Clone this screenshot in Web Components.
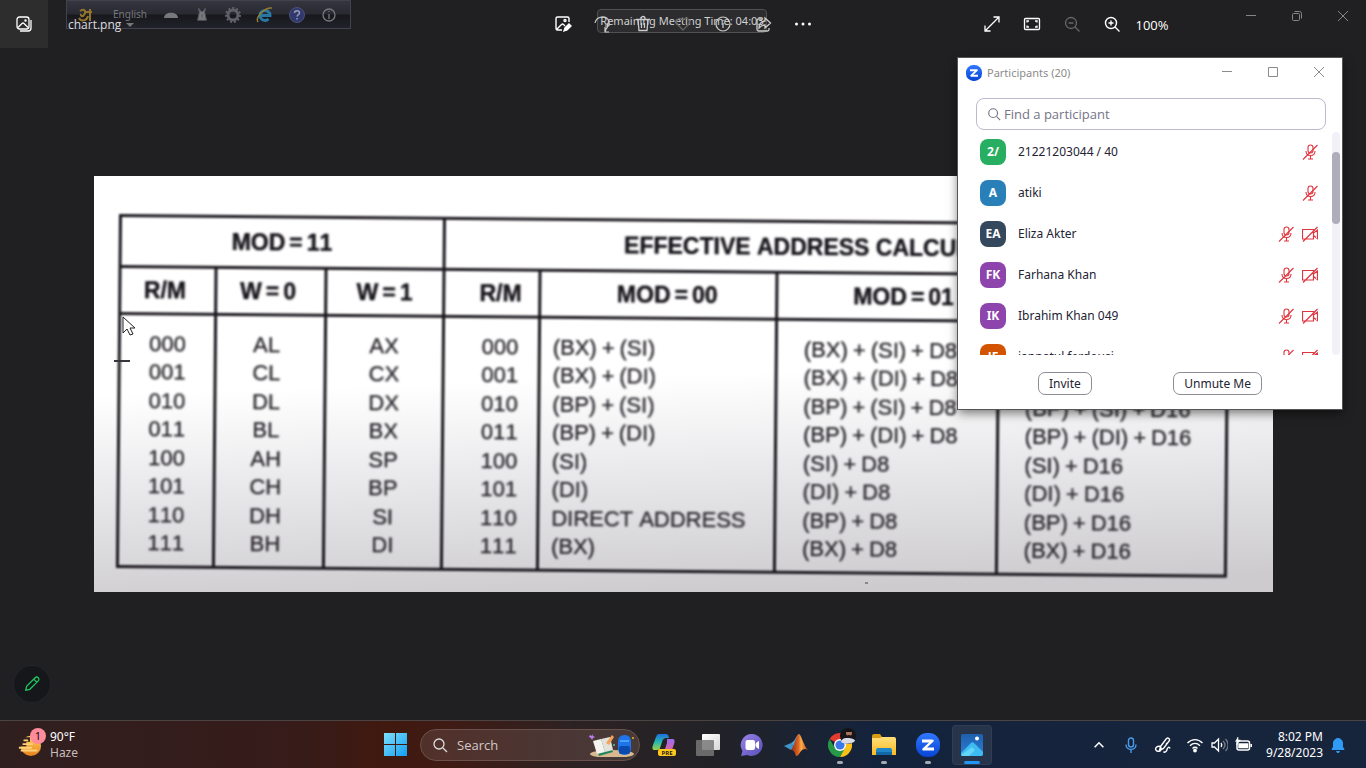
<!DOCTYPE html>
<html lang="en">
<head>
<meta charset="utf-8">
<title>chart.png</title>
<style>
  html, body { height: 100%; }
  body { margin: 0; background: #202022; color: #fff; font: 12px/16px "Noto Sans", "Open Sans", sans-serif; overflow: hidden; }
</style>
</head>
<body>
<photo-desktop></photo-desktop>
<script>
const define = (name, html, setup) => {
  const template = document.createElement('template');
  template.innerHTML = html;
  customElements.define(name, class extends HTMLElement {
    connectedCallback() {
      if (this.shadowRoot) return;
      this.attachShadow({ mode: 'open' }).append(template.content.cloneNode(true));
      if (setup) setup(this, this.shadowRoot);
    }
  });
};

/* name: [size, body, stroke width] */
const icons = {
  gallery: [18, '<rect x="2" y="2" width="12" height="12" rx="2.5"/><path d="M16 5v8a3 3 0 0 1-3 3H5M3 12.500l4-4a1.500 1.500 0 0 1 2 0l4 4"/><circle cx="10.500" cy="5.500" r=".6"/>', 1.3],
  edit: [18, '<path d="M8 15H3.500A1.500 1.500 0 0 1 2 13.500v-10A1.500 1.500 0 0 1 3.500 2h10A1.500 1.500 0 0 1 15 3.500V7M3 14l4.500-4.500a1.500 1.500 0 0 1 2 0L11 11"/><circle cx="11" cy="5.500" r="1"/><path d="M10 16l1-3 4-4 2 2-4 4z" fill="currentColor"/>', 1.4],
  rotate: [18, '<path d="M1 8a7.500 7.500 0 0 1 14-2v5M15 11l-4 0M13 8a5 5 0 0 1-1 6l-1 3M11 12v5h4"/>', 1.2],
  trash: [18, '<path d="M2 4.500h14M7 4.500V3.500a2 2 0 0 1 4 0v1M4 5l1 10.500h8L14 5M7.500 8v5M10.500 8v5"/>', 1.3],
  heart: [18, '<path d="M9 15L3 9a3.500 3.500 0 0 1 6-4 3.500 3.500 0 0 1 6 4z"/>', 1.2],
  info: [18, '<circle cx="9" cy="9" r="7"/><path d="M9 8v5M9 5v1"/>', 1.2],
  share: [18, '<path d="M8 4H4.500A1.500 1.500 0 0 0 3 5.500v9A1.500 1.500 0 0 0 4.500 16h9a1.500 1.500 0 0 0 1.500-1.500V13M11 3l5.500 5L11 13v-3c-3 0-4 .5-6 3 0-4 2-6.500 6-7z"/>', 1.3],
  more: [18, '<g fill="currentColor" stroke="none"><circle cx="2.500" cy="9" r="1.500"/><circle cx="9" cy="9" r="1.500"/><circle cx="15.500" cy="9" r="1.500"/></g>'],
  expand: [18, '<path d="M10.500 2H16v5.500M16 2L2 16M2 10.500V16h5.500"/>', 1.3],
  fit: [18, '<rect x="1.500" y="3.500" width="15" height="11" rx="1"/><path d="M4 7.500V6h2M12 6h2v1.500M14 10.500V12h-2M6 12H4v-1.500"/>', 1.3],
  zoomout: [18, '<circle cx="8" cy="8" r="5.500"/><path d="M12 12l4.500 4.500M5.500 8h5"/>', 1.3],
  zoomin: [18, '<circle cx="8" cy="8" r="5.500"/><path d="M12 12l4.500 4.500M5.500 8h5M8 5.500v5"/>', 1.4],
  min: [12, '<path d="M1 5.500h10"/>', 1],
  max: [12, '<path d="M1.500 1.500h9v9h-9z"/>', 1],
  restore: [12, '<rect x="1.500" y="3.500" width="7" height="7" rx="1"/><path d="M3.500 1.500h5a2 2 0 0 1 2 2v5"/>', 1],
  close: [12, '<path d="M1 1l10 10M11 1L1 11"/>', 1],
  search: [16, '<circle cx="7" cy="7" r="5"/><path d="M11 11l4 4"/>', 1.3],
  pen: [18, '<path d="M2 16l1-4.500 9.500-9.500a2.200 2.200 0 0 1 3.500 3.500L6.500 15zM11 3.500L14.500 7M2 16l4.500-1"/>', 1.5],
  micoff: [16, '<rect x="6" y="1" width="5" height="8" rx="2.500"/><path d="M4 7c0 6 9 6 9 0M8.500 11.500V15M6 15h5M1 15.500L15.500 1"/>', 1.1],
  camoff: [16, '<path d="M11.500 3.500H.5v9.500h11zM11.500 7l4-3v8.500l-4-3M1 15.500L15.500 1"/>', 1.2],
  chevron: [16, '<path d="M3 10.500l5-5 5 5"/>', 1.8],
  mic: [16, '<rect x="5.500" y="1" width="5" height="9" rx="2.500"/><path d="M3 7.500c0 6.500 10 6.500 10 0M8 12.500V16"/>', 1.4],
  ink: [18, '<path d="M6.500 10.500L12.500 2.500a1.900 1.900 0 0 1 3 2L9.500 12.500l-4 2zM6.500 10.500C2 9.500 0 13.500 3 15c4 1.500 5-2 3.500-4.500M9.500 15.500c1 1.500 3 .5 3.500-2s2.500-3 3-1M12 8l2.500-2"/>', 1.4],
  wifi: [18, '<path d="M1.500 7c4.500-4.500 10.500-4.500 15 0M4 9.800c3-3 7-3 10 0M6.500 12.400c1.500-1.500 3.500-1.500 5 0"/><circle cx="9" cy="14.500" r="1.200" fill="currentColor"/>', 1.4],
  sound: [18, '<path d="M2 7h2.500L8.500 3v12l-4-4H2zM11 7c1 1.300 1 2.700 0 4"/><path d="M13 5c2.500 2.500 2.500 5.500 0 8M15.500 3c3.500 3.500 3.500 8.500 0 12" opacity=".4"/>', 1.3],
  battery: [18, '<rect x="3" y="5" width="12.500" height="9" rx="2"/><path d="M5 8h8.500v3.500H5z" fill="currentColor"/><path d="M17.200 8v3" stroke-width="1.600"/><path d="M4 1L1.500 5.500h2L2.500 9 6.500 4H4z" fill="currentColor" stroke-width=".5"/>', 1.5],
  bell: [18, '<path d="M3 13.500V13l1.500-2V7a4.500 4.500 0 0 1 9 0v4l1.500 2v.5zM7.500 15.500a1.500 1 0 0 0 3 0z" fill="currentColor"/>', 1],
  windows: [24, '<defs><linearGradient id="g" x2="1" y2="1"><stop stop-color="#7ee0fd"/><stop offset="1" stop-color="#129ff2"/></linearGradient></defs><path d="M0 0h11v11H0zM12 0h11v11H12zM0 12h11v11H0zM12 12h11v11H12z" fill="url(#g)" stroke="none"/>'],
  zoom: [24, '<defs><linearGradient id="g" x2="0" y2="1"><stop stop-color="#2f78ff"/><stop offset="1" stop-color="#0844d4"/></linearGradient></defs><rect width="24" height="24" rx="11" fill="url(#g)" stroke="none"/><path d="M6 6.500h10q2.500 0 1.500 2l-6.500 6h7v3H8q-2.500 0-1.500-2l6.500-6H6z" fill="#fff" stroke="none"/>'],
  copilot: [24, '<defs><linearGradient id="a" x2="0" y2="1"><stop stop-color="#1f6fe0"/><stop offset=".5" stop-color="#24b7b0"/><stop offset="1" stop-color="#9fd04a"/></linearGradient><linearGradient id="b" x2="0" y2="1"><stop stop-color="#9a6cf2"/><stop offset="1" stop-color="#f0608f"/></linearGradient></defs><g stroke="none"><path d="M7 1h7c2 0 2.500 2 3 4h-3c-2 0-3 1-4 4l-2 6c0 1-1 2-3 2H3c-3 0-3-2-2-5L4 4c1-2 1-3 3-3z" fill="url(#a)"/><path d="M15 6h5c3 0 3 2 2 5l-2 6c-1 2-2 3-4 3h-6c2 0 2-1 3-4l2-6z" fill="url(#b)"/><rect x="6" y="16" width="18" height="7" rx="2" fill="#ffc81c"/></g><text x="15" y="22" font-size="6" font-weight="700" font-family="Open Sans" text-anchor="middle" fill="#222" stroke="none">PRE</text>'],
  taskview: [24, '<defs><linearGradient id="g" x2="1" y2="1"><stop stop-color="#fff"/><stop offset="1" stop-color="#d8d8d8"/></linearGradient></defs><g stroke="none"><rect x="6" y="1" width="18" height="16" rx="1" fill="url(#g)"/><rect x="0" y="7" width="18" height="16" rx="1" fill="#777" opacity=".85"/></g>'],
  chat: [24, '<defs><linearGradient id="g" x2="1" y2="1"><stop stop-color="#9b82e8"/><stop offset="1" stop-color="#5650b8"/></linearGradient></defs><path d="M12 1a11 11 0 1 1-5 21l-6 1 1.500-5A11 11 0 0 1 12 1z" fill="url(#g)" stroke="none"/><rect x="5.500" y="7" width="9.500" height="10" rx="2" fill="#fff" stroke="none"/><path d="M16 10.500L18.500 8.500v7L16 13.500z" fill="#fff" stroke="#fff"/>'],
  matlab: [24, '<defs><linearGradient id="g" x2="1"><stop stop-color="#8d2417"/><stop offset=".45" stop-color="#e06a22"/><stop offset=".6" stop-color="#f9b04b"/><stop offset="1" stop-color="#c03c16"/></linearGradient></defs><g stroke="none"><path d="M0 13l7-3 3 4-3 3z" fill="#3f94c9"/><path d="M7 10c4-1 5-8 8-9l-4 14-4 2 3-3z" fill="#4aa7dc"/><path d="M7 17c3-3 5-15 8-16 2 0 5 13 9 16-3-2-5-1-7 1-2 3-3 5-5 5-1-3-2-6-5-6z" fill="url(#g)"/></g>'],
  chrome: [24, '<g stroke="none"><path d="M12 12L1.600 6A12 12 0 0 1 22.400 6z" fill="#e33b2e"/><path d="M12 12h4.700L12 24A12 12 0 0 0 22.400 6H12z" fill="#fbc116"/><path d="M1.600 6A12 12 0 0 0 12 24l5.200-9L12 12 7 15z" fill="#279847"/><circle cx="12" cy="12" r="6" fill="#fff"/><circle cx="12" cy="12" r="4.600" fill="#3b78e7"/></g>'],
  folder: [24, '<defs><linearGradient id="g" x2="0" y2="1"><stop stop-color="#ffe07a"/><stop offset="1" stop-color="#fbb91f"/></linearGradient></defs><g stroke="none"><path d="M0 3a2 2 0 0 1 2-2h6l2 3h12v6H0z" fill="#d89b12"/><path d="M0 5h8l2-1h12a2 2 0 0 1 2 2v16H0z" fill="url(#g)"/><path d="M4 22v-5a2 2 0 0 1 2-2h12a2 2 0 0 1 2 2v5z" fill="#1e86c9"/><path d="M4 19h16v3H4z" fill="#1268a5"/></g>'],
  photos: [24, '<defs><linearGradient id="g" x2="0" y2="1"><stop stop-color="#1e5fae"/><stop offset="1" stop-color="#2c80d8"/></linearGradient></defs><g stroke="none"><rect x="1" y="1" width="22" height="22" rx="2" fill="url(#g)"/><path d="M1 20L11 10c1-1 2-1 3 0l9 9v2a2 2 0 0 1-2 2H3a2 2 0 0 1-2-2z" fill="#3cbcf0"/><path d="M12 14l3 3-6 6H3a2 2 0 0 1-2-1z" fill="#62d6f7"/><circle cx="17" cy="5.500" r="2" fill="#fff"/></g>'],
  haze: [26, '<defs><linearGradient id="g" x2="0" y2="1"><stop stop-color="#ffd565"/><stop offset="1" stop-color="#e8801c"/></linearGradient></defs><circle cx="14" cy="14" r="11" fill="url(#g)" stroke="none"/><path d="M2 7h11M1 12h8" stroke="#34201f" stroke-width="5"/><path d="M6 8h5M5 12h11M1 16h14M3 19h18" stroke="#ffd27a" stroke-width="2"/>'],
  keyboard: [18, '<path d="M2 12c0-7 14-7 14 0z" fill="#77787c" stroke="none"/>'],
  mouse: [18, '<path d="M5 1l1 5-2 9h10l-2-9 1-5-3 4H8zM9 8v4" fill="#77787c" stroke="#55565c"/>'],
  gear: [18, '<circle cx="9" cy="9" r="5" stroke="#5e6268" stroke-width="3"/><circle cx="9" cy="9" r="7" stroke="#5e6268" stroke-width="2" stroke-dasharray="2 2"/>'],
  browser: [18, '<path d="M4 9.500h10a5 5 0 1 0-1.500 3.500" stroke="#2778a4" stroke-width="3"/><path d="M2 16C-1 11 9 1 16 2" stroke="#937d30" stroke-width="1.500"/>'],
  help: [18, '<circle cx="9" cy="9" r="7.500" fill="#30396d" stroke="#4c5277"/><path d="M6.500 7c0-3 5-3 5 0 0 1.500-2.500 2-2.500 3.500M9 12v1.500" stroke="#999bb4" stroke-width="1.500"/>'],
  about: [18, '<circle cx="9" cy="9" r="6"/><path d="M9 8v5M9 5v1"/>', 1.3],
  avro: [18, '<path d="M4 5c4-3 7 0 4 4-1 2-4 1-3-1M3 12c2 4 8 3 9-2M10 6h6M14 3v12" stroke="#93752c" stroke-width="2"/>'],
  bookbag: [48, '<g stroke="none"><ellipse cx="24" cy="21" rx="22" ry="4" fill="#d9b98f"/><path d="M6 9l14-3 5 13-14 4z" fill="#24855b"/><path d="M5 8l8-2 4 13-8 2z" fill="#f5f3ee"/><path d="M13 6l9-2 3 13-8 2z" fill="#e4e1da"/><path d="M18 10l6-8 2 2-5 8z" fill="#f0a45c"/><rect x="30" y="2" width="13" height="20" rx="6" fill="#1e74e8"/><rect x="31" y="13" width="11" height="8" rx="2" fill="#0a49ae"/><path d="M32 8h9" stroke="#57b0ff" stroke-width="1.500"/><path d="M2 2l2 1 1-2 0 2 2 1-2 1-1 2-1-2-2-1z" fill="#c27bf0"/><circle cx="45" cy="5" r="1" fill="#f6b62a"/><circle cx="26" cy="12" r="1" fill="#57c8a0"/></g>'],
  pointer: [20, '<path d="M1 1v16l4-4 3 6 3-1-3-6h5z" fill="#fff" stroke="#222"/>', 1]
};

customElements.define('ui-icon', class extends HTMLElement {
  connectedCallback() {
    if (this.shadowRoot) return;
    const [box, body, width = 1] = icons[this.getAttribute('name')];
    const size = Number(this.getAttribute('size') || box);
    const wide = this.getAttribute('name') === 'bookbag';
    this.attachShadow({ mode: 'open' }).innerHTML =
      `<style>:host{display:inline-flex;flex:none}svg{display:block}</style>
       <svg aria-hidden="true" width="${size}" height="${wide ? size / 2 : size}" viewBox="0 0 ${box} ${wide ? box / 2 : box}" fill="none" stroke="currentColor" stroke-width="${width}">${body}</svg>`;
  }
});

define('tool-button', `
  <style>
    :host { display: flex; flex: none; width: 40px; height: 48px; }
    button { all: unset; flex: 1; display: flex; align-items: center; justify-content: center; position: relative; }
  </style>
  <button type="button"><slot></slot></button>`,
  (host, root) => root.querySelector('button').setAttribute('aria-label', host.getAttribute('label')));

define('window-controls', `
  <style>
    :host { display: flex; align-self: flex-start; }
    tool-button { width: 46px; height: var(--controls-height, 32px); }
  </style>
  <tool-button label="Minimize"><ui-icon name="min"></ui-icon></tool-button>
  <tool-button label="Maximize"><ui-icon id="size" name="restore"></ui-icon></tool-button>
  <tool-button label="Close"><ui-icon name="close"></ui-icon></tool-button>`,
  (host, root) => {
    if (!host.hasAttribute('restored')) return;
    const icon = document.createElement('ui-icon');
    icon.setAttribute('name', 'max');
    root.querySelector('#size').replaceWith(icon);
  });

define('keyboard-bar', `
  <style>
    :host { display: flex; align-items: center; box-sizing: border-box; width: 285px; height: 29px; padding: 0 9px; gap: 14px;
      border: 1px solid #41424d; background: linear-gradient(#35353f, #292932 48%, #17171c 52%, #22222b); color: #77787c; }
    .mode { font-size: 10px; margin: -2px 1px 0 5px; }
  </style>
  <ui-icon name="avro"></ui-icon><span class="mode">English</span><ui-icon name="keyboard"></ui-icon>
  <ui-icon name="mouse" size="16"></ui-icon><ui-icon name="gear"></ui-icon><ui-icon name="browser"></ui-icon>
  <ui-icon name="help"></ui-icon><ui-icon name="about" size="18"></ui-icon>`);

define('viewer-toolbar', `
  <style>
    :host { display: grid; grid-template-columns: 1fr auto 1fr; height: 48px; position: relative; }
    .left, .tools, .right { display: flex; align-items: center; position: relative; }
    .home { width: 48px; background: #2d2d2e; }
    .name { display: flex; align-items: center; gap: 5px; margin: 2px 0 0 20px; color: #ddd; font-family: "Open Sans", sans-serif; }
    .caret { border: 4px solid transparent; border-top-color: #777; border-bottom: 0; }
    keyboard-bar { position: absolute; left: 66px; top: 0; }
    .timer { position: absolute; left: 50%; top: 9px; transform: translateX(-50%); margin-left: -1px; box-sizing: border-box; width: 170px; height: 24px;
      border: 1px solid #515153; border-radius: 4px; background: #2c2c2e; color: #d0d0d0; text-align: center; font-size: 11px; line-height: 22px; white-space: nowrap; }
    .right { justify-content: flex-end; }
    .zoom { width: 40px; text-align: center; font: 13px/20px "Open Sans", sans-serif; margin: 2px 56px 0 0; }
    .dim { color: #666; }
    .soft { color: #ccc; }
    window-controls { color: #858585; }
  </style>
  <keyboard-bar></keyboard-bar>
  <div class="timer">Remaining Meeting Time: 04:03</div>
  <div class="left">
    <tool-button class="home" label="All photos"><ui-icon name="gallery"></ui-icon></tool-button>
    <span class="name">chart.png <span class="caret"></span></span>
  </div>
  <div class="tools">
    <tool-button label="Edit image"><ui-icon name="edit"></ui-icon></tool-button>
    <tool-button class="soft" label="Rotate"><ui-icon name="rotate"></ui-icon></tool-button>
    <tool-button class="soft" label="Delete"><ui-icon name="trash"></ui-icon></tool-button>
    <tool-button class="dim" label="Favorite"><ui-icon name="heart"></ui-icon></tool-button>
    <tool-button class="soft" label="Info"><ui-icon name="info"></ui-icon></tool-button>
    <tool-button class="soft" label="Share"><ui-icon name="share"></ui-icon></tool-button>
    <tool-button label="See more"><ui-icon name="more"></ui-icon></tool-button>
  </div>
  <div class="right">
    <tool-button label="Full screen"><ui-icon name="expand"></ui-icon></tool-button>
    <tool-button label="Zoom to fit"><ui-icon name="fit"></ui-icon></tool-button>
    <tool-button class="dim" label="Zoom out"><ui-icon name="zoomout"></ui-icon></tool-button>
    <tool-button label="Zoom in"><ui-icon name="zoomin"></ui-icon></tool-button>
    <span class="zoom">100%</span>
    <window-controls></window-controls>
  </div>`);

/* The scanned page sits slightly rotated on its sheet. */
define('chart-picture', `
  <style>
    :host { display: block; box-sizing: border-box; padding: 38px 43px 24px 25px; position: relative;
      background: linear-gradient(178deg, #fff 0 48%, #ececee 66%, #cdcbce 96%); color: #302d32;
      font: 22px/28px "Liberation Sans", Arial, sans-serif; font-kerning: none; }
    table { width: 100%; table-layout: fixed; border-collapse: collapse; transform: rotate(.5deg); transform-origin: 0 0; filter: blur(1px); text-shadow: 0 0 1px; white-space: nowrap; }
    th, td { padding: 0; border: 3px solid #19161c; overflow: visible; }
    th { font-size: 23px; color: #19161c; }
    thead tr:first-child { height: 51px; }
    thead tr:last-child { height: 47px; }
    td { border-width: 0 3px; text-align: center; height: 28px; }
    tbody tr:nth-child(odd) td { height: 29px; }
    tbody tr:first-child td { padding-top: 14px; }
    tbody tr:last-child td { padding-bottom: 8px; border-bottom-width: 3px; }
    td:nth-child(n+5) { text-align: left; padding-left: 12px; }
    td:nth-child(n+6) { padding-left: 26px; }
    td:nth-child(2) { padding-right: 8px; }
    td:nth-child(4), .shift { padding-left: 18px; }
    .far { padding-left: 32px; }
    .near { padding-right: 6px; }
    i { font-style: normal; margin: 0 5px; }
    th i { margin: 0 4px; }
    .tick { position: absolute; left: 20px; top: 184px; width: 16px; height: 2px; background: #39363b; }
    .speck { position: absolute; left: 771px; bottom: 8px; width: 3px; height: 2px; background: #8a878c; }
  </style>
  <table>
    <colgroup><col style="width:8.7%"><col style="width:9.9%"><col style="width:10.6%"><col style="width:8.7%"><col style="width:21.4%"><col style="width:20%"><col></colgroup>
    <thead>
      <tr><th colspan="3">MOD<i>=</i>11</th><th colspan="4" class="near">EFFECTIVE ADDRESS CALCULATION</th></tr>
      <tr><th class="near">R/M</th><th class="near">W<i>=</i>0</th><th>W<i>=</i>1</th><th class="shift">R/M</th><th class="shift">MOD<i>=</i>00</th><th class="far">MOD<i>=</i>01</th><th>MOD<i>=</i>10</th></tr>
    </thead>
    <tbody></tbody>
  </table>
  <span class="tick"></span><span class="speck"></span>`,
  (host, root) => {
    const rows = [
      ['000', 'AL', 'AX', '(BX)+(SI)'], ['001', 'CL', 'CX', '(BX)+(DI)'], ['010', 'DL', 'DX', '(BP)+(SI)'], ['011', 'BL', 'BX', '(BP)+(DI)'],
      ['100', 'AH', 'SP', '(SI)'], ['101', 'CH', 'BP', '(DI)'], ['110', 'DH', 'SI', 'DIRECT ADDRESS', '(BP)'], ['111', 'BH', 'DI', '(BX)']];
    root.querySelector('tbody').innerHTML = rows.map(([code, byte, word, plain, base = plain]) =>
      '<tr>' + [code, byte, word, code, plain, base + '+D8', base + '+D16']
        .map(text => `<td>${text.replaceAll('+', '<i>+</i>')}</td>`).join('') + '</tr>').join('');
  });

define('participant-row', `
  <style>
    :host { display: flex; flex: none; align-items: center; height: 41px; color: #232333; font: 12px/18px "Noto Sans", sans-serif; }
    .avatar { width: 26px; height: 26px; border-radius: 8px; background: var(--tint); color: #fff; font: 700 12px/26px "Noto Sans", sans-serif; text-align: center; margin-right: 12px; }
    .name { flex: 1; }
    .state { display: flex; gap: 8px; color: #e0353f; }
  </style>
  <span class="avatar"></span><span class="name"><slot></slot></span>
  <span class="state"><ui-icon name="micoff"></ui-icon></span>`,
  (host, root) => {
    root.querySelector('.avatar').textContent = host.getAttribute('initials');
    if (host.hasAttribute('camera')) {
      const icon = document.createElement('ui-icon');
      icon.setAttribute('name', 'camoff');
      root.querySelector('.state').append(icon);
    }
  });

define('participants-window', `
  <style>
    :host { display: flex; flex-direction: column; width: 384px; background: #fff; color: #232333; box-shadow: 0 0 0 1px #555, 0 4px 10px #0008; --controls-height: 28px; }
    header { display: flex; align-items: center; height: 30px; padding-left: 8px; color: #8b8b8b; font-size: 11px; }
    header span { flex: 1; margin-left: 5px; }
    .search { display: flex; align-items: center; gap: 3px; height: 30px; margin: 10px 16px 1px 18px; padding-left: 10px; border: 1px solid #bdbacd; border-radius: 8px; color: #747487; }
    input { all: unset; flex: 1; font: 13px/18px "Open Sans", sans-serif; }
    input::placeholder { color: #747487; opacity: 1; }
    .body { display: flex; height: 224px; overflow: hidden; }
    .list { flex: 1; display: flex; flex-direction: column; padding: 0 14px 0 22px; }
    .track { width: 8px; margin: 1px 2px 0 0; border-radius: 4px; background: #f2f1f7; padding-top: 20px; }
    .thumb { height: 72px; border-radius: 4px; background: #aeadb9; }
    footer { display: flex; justify-content: space-between; padding: 17px 80px 14px; }
    button { box-sizing: border-box; height: 23px; padding: 0 10px; border: 1px solid #8d8d96; border-radius: 7px; background: #fff; color: #232333; font: 12px/20px "Noto Sans", sans-serif; }
  </style>
  <header><ui-icon name="zoom" size="16"></ui-icon><span>Participants (20)</span><window-controls restored></window-controls></header>
  <label class="search"><ui-icon name="search" size="14"></ui-icon><input type="text" aria-label="Find a participant" placeholder="Find a participant"></label>
  <div class="body">
    <div class="list">
      <participant-row initials="2/" style="--tint:#27ae60">21221203044 / 40</participant-row>
      <participant-row initials="A" style="--tint:#2980b9">atiki</participant-row>
      <participant-row initials="EA" style="--tint:#34495e" camera>Eliza Akter</participant-row>
      <participant-row initials="FK" style="--tint:#8e44ad" camera>Farhana Khan</participant-row>
      <participant-row initials="IK" style="--tint:#8e44ad" camera>Ibrahim Khan 049</participant-row>
      <participant-row initials="JF" style="--tint:#d35400" camera>jannatul ferdousi</participant-row>
    </div>
    <div class="track"><div class="thumb"></div></div>
  </div>
  <footer><button type="button">Invite</button><button type="button">Unmute Me</button></footer>`);

define('task-app', `
  <style>
    :host { display: flex; flex: none; width: 44px; height: 48px; position: relative; align-items: center; justify-content: center; }
    :host([active])::before { content: ""; position: absolute; inset: 4px 2px; border-radius: 4px; background: #ffffff14; box-shadow: inset 0 0 0 1px #ffffff0c; }
    button { all: unset; display: flex; position: relative; }
    :host([open])::after { content: ""; position: absolute; bottom: 5px; width: 6px; height: 3px; border-radius: 2px; background: #a5aab2; }
    :host([active])::after { width: 16px; background: #2196f3; }
  </style>
  <button type="button"><slot></slot></button>`,
  (host, root) => root.querySelector('button').setAttribute('aria-label', host.getAttribute('label')));

define('desktop-taskbar', `
  <style>
    :host { display: grid; grid-template-columns: 1fr auto 1fr; align-items: center; box-sizing: border-box; height: 48px; border-top: 1px solid #4b4442; position: relative;
      background: linear-gradient(90deg, #301f1f, #361b19 22%, #40190f 28%, #3f1b14 33%, #2d2223 42%, #222226 52%, #14233c 64%, #17253c); }
    .weather { display: flex; align-items: center; gap: 8px; padding-left: 18px; position: relative; }
    .weather small { display: block; font-size: 12px; color: #c6bdbc; }
    .count { position: absolute; left: 30px; top: -1px; width: 16px; height: 16px; border-radius: 8px; background: #ff8b9b; color: #111; text-align: center; font-size: 11px; }
    .apps { display: flex; align-items: center; padding-left: 2px; }
    .search { box-sizing: border-box; display: flex; align-items: center; gap: 9px; width: 220px; height: 32px; margin: 0 2px; padding: 0 3px 0 11px; border: 1px solid #6a514c; border-radius: 16px;
      background: linear-gradient(90deg, #52302a, #463a39); color: #ddd; }
    input { all: unset; flex: 1; min-width: 0; font: 13px/20px "Open Sans", sans-serif; }
    input::placeholder { color: #d3c9c7; opacity: 1; }
    .person { position: absolute; right: -4px; top: -5px; width: 16px; height: 16px; }
    .tray { display: flex; align-items: center; justify-content: flex-end; padding-right: 19px; }
    .tray > ui-icon { margin-right: 6px; }
    .wide { width: 32px; height: 32px; }
    time { text-align: right; margin: 0 6px 0 8px; }
  </style>
  <div class="weather"><ui-icon name="haze" size="24"></ui-icon><span class="count">1</span><div>90°F<small>Haze</small></div></div>
  <div class="apps">
    <task-app label="Start"><ui-icon name="windows"></ui-icon></task-app>
    <label class="search"><ui-icon name="search"></ui-icon><input type="text" aria-label="Search" placeholder="Search"><ui-icon name="bookbag"></ui-icon></label>
    <task-app label="Copilot"><ui-icon name="copilot"></ui-icon></task-app>
    <task-app label="Task view"><ui-icon name="taskview"></ui-icon></task-app>
    <task-app label="Chat"><ui-icon name="chat"></ui-icon></task-app>
    <task-app label="MATLAB"><ui-icon name="matlab"></ui-icon></task-app>
    <task-app label="Chrome" open><ui-icon name="chrome"></ui-icon>
      <svg class="person" viewBox="0 0 16 16"><circle cx="8" cy="8" r="8" fill="#16161a"/><path d="M1 14c1-4 4-4 7-4s7 1 7 3c-3 3-10 4-14 1z" fill="#d9dce4"/><circle cx="9" cy="5" r="3" fill="#a9745c"/><path d="M6 4c0-4 6-4 6 0z" fill="#15100f"/><path d="M7 7h4l-2 2z" fill="#2a1a17"/></svg></task-app>
    <task-app label="File Explorer" open><ui-icon name="folder"></ui-icon></task-app>
    <task-app label="Zoom" open><ui-icon name="zoom"></ui-icon></task-app>
    <task-app label="Photos" open active><ui-icon name="photos"></ui-icon></task-app>
  </div>
  <div class="tray">
    <tool-button class="wide" label="Hidden icons"><ui-icon name="chevron" size="14"></ui-icon></tool-button>
    <tool-button class="wide" label="Microphone" style="color:#4a9be8"><ui-icon name="mic"></ui-icon></tool-button>
    <tool-button class="wide" label="Pen menu"><ui-icon name="ink"></ui-icon></tool-button>
    <ui-icon name="wifi" style="margin-left:7px"></ui-icon><ui-icon name="sound"></ui-icon><ui-icon name="battery"></ui-icon>
    <time datetime="2023-09-28T20:02">8:02 PM<br>9/28/2023</time>
    <ui-icon name="bell" style="color:#2f9bf5;margin:0"></ui-icon>
  </div>`);

define('photo-desktop', `
  <style>
    :host { display: flex; flex-direction: column; height: 100%; position: relative; }
    main { flex: 1; display: flex; flex-direction: column; justify-content: center; padding: 0 93px 0 94px; position: relative; }
    tool-button { position: absolute; left: 13px; bottom: 17px; width: 38px; height: 38px; border-radius: 50%; background: #15171b; color: #22c55e; box-shadow: inset 0 0 0 1px #25272c; }
    participants-window { position: absolute; right: 24px; top: 58px; }
    .pointer { position: absolute; left: 122px; top: 316px; }
  </style>
  <viewer-toolbar></viewer-toolbar>
  <main><chart-picture></chart-picture><tool-button label="Annotate"><ui-icon name="pen" size="16"></ui-icon></tool-button></main>
  <desktop-taskbar></desktop-taskbar>
  <participants-window></participants-window>
  <ui-icon class="pointer" name="pointer"></ui-icon>`);
</script>
</body>
</html>
